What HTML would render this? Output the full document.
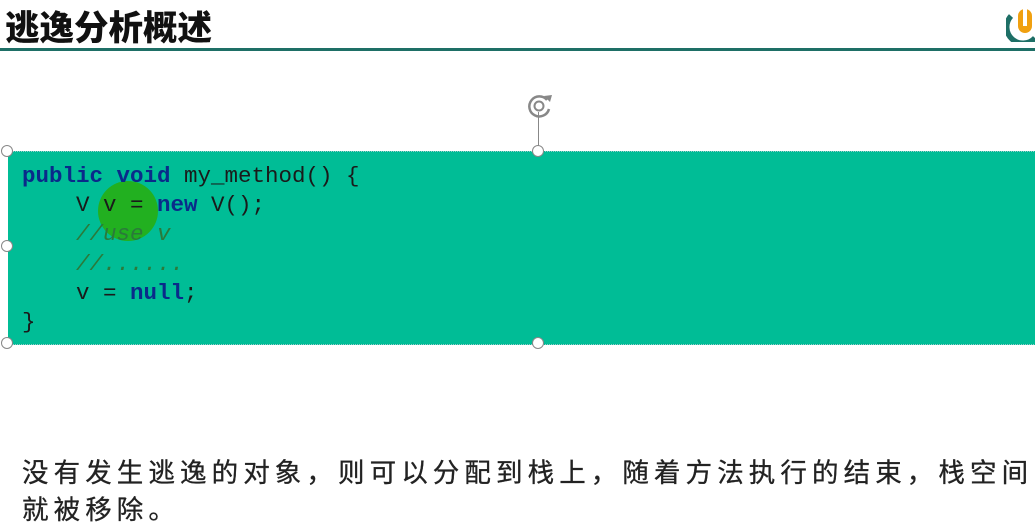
<!DOCTYPE html>
<html><head><meta charset="utf-8"><style>
body{margin:0;width:1035px;height:530px;background:#fff;position:relative;overflow:hidden;font-family:"Liberation Sans","Noto Sans CJK SC",sans-serif}
.t{position:absolute;left:5px;top:0px;font-size:34.5px;font-weight:900;color:#111;letter-spacing:0px}
.bar{position:absolute;left:0;top:48px;width:1035px;height:3px;background:#1e6f66}
.box{position:absolute;left:8px;top:151px;width:1030px;height:192px;background:#00bd96;border-top:1px dotted #9cc;border-bottom:1px dotted #9cc}
pre{margin:0;position:absolute;left:22px;top:162px;font-family:"Liberation Mono",monospace;font-size:22.5px;line-height:29.2px;color:#1a1a1a}
.k{color:#0a2a8a;font-weight:bold}
.c{color:#2a7a3a;font-style:italic}
.h{position:absolute;width:10px;height:10px;border:1.5px solid #888;border-radius:50%;background:#fff}
.cn{position:absolute;left:22px;top:455px;font-size:26.5px;line-height:37px;color:#222;letter-spacing:5.1px;font-family:"Liberation Sans","Noto Sans CJK SC",sans-serif;white-space:nowrap;-webkit-text-stroke:0.3px #222}
</style></head><body>
<div class="t">逃逸分析概述</div>
<div class="bar"></div>
<svg style="position:absolute;left:1006px;top:6px" width="29" height="36" viewBox="0 0 29 36"><path d="M5 10 A13 13 0 0 0 29 32" stroke="#1e6f66" stroke-width="5.5" fill="none"/><rect x="12" y="3" width="14" height="24" rx="7" fill="#f0a010"/><rect x="17" y="3" width="4" height="17" fill="#fff"/></svg>
<div class="box"></div>
<div style="position:absolute;left:98px;top:181px;height:60px;border-radius:50%;background:#22b020;width:60px"></div>
<pre><span class="k">public void</span> my_method() {
    V v = <span class="k">new</span> V();
    <span class="c">//use v</span>
    <span class="c">//......</span>
    v = <span class="k">null</span>;
}</pre>
<div style="position:absolute;left:538px;top:112px;width:1px;height:36px;background:#888"></div>
<svg style="position:absolute;left:524px;top:92px" width="32" height="28" viewBox="0 0 32 28"><path d="M23 8 A10 10 0 1 0 25 17" stroke="#888" stroke-width="2.5" fill="none"/><circle cx="15" cy="14" r="4.5" stroke="#888" stroke-width="2" fill="none"/><path d="M20 4 L26 10 L28 3Z" fill="#888"/></svg>
<div class="h" style="left:1px;top:145px"></div>
<div class="h" style="left:532px;top:145px"></div>
<div class="h" style="left:1px;top:240px"></div>
<div class="h" style="left:1px;top:337px"></div>
<div class="h" style="left:532px;top:337px"></div>
<div class="cn">没有发生逃逸的对象，则可以分配到栈上，随着方法执行的结束，栈空间<br>就被移除。</div>
</body></html>
